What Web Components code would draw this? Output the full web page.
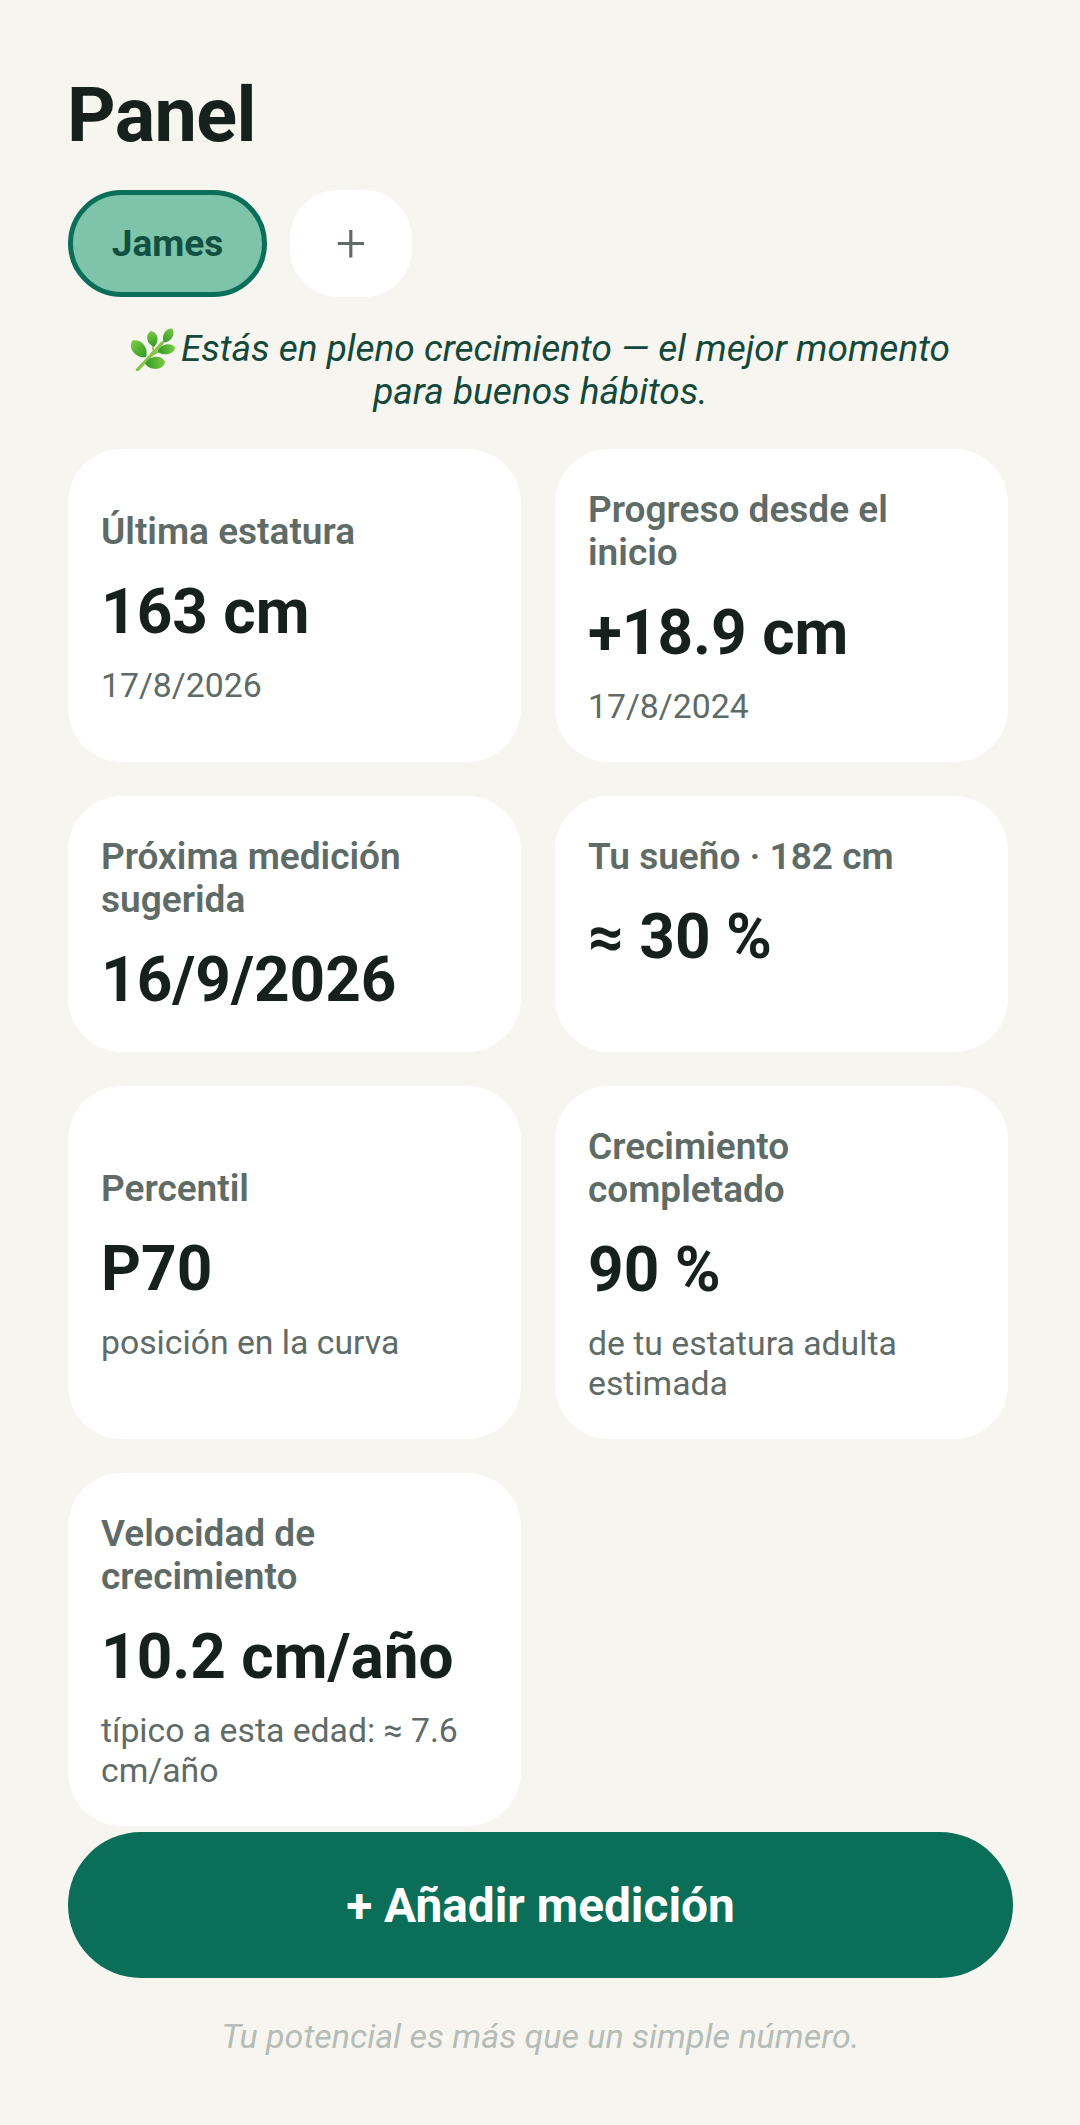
<!DOCTYPE html>
<html lang="es">
<head>
<meta charset="UTF-8">
<title>Panel</title>
<style>
    html, body { margin: 0; background: #f6f5f0; }
    body { font-family: Roboto, "Liberation Sans", sans-serif; }
</style>
</head>
<body>
<growth-panel>
    <span slot="title">Panel</span>
    <profile-pill active>James</profile-pill>
    <profile-pill add>+</profile-pill>
    <span slot="hint">Estás en pleno crecimiento — el mejor momento para buenos hábitos.</span>
    <stat-card label="Última estatura" value="163 cm" sub="17/8/2026" center></stat-card>
    <stat-card label="Progreso desde el inicio" value="+18.9 cm" sub="17/8/2024" center></stat-card>
    <stat-card label="Próxima medición sugerida" value="16/9/2026"></stat-card>
    <stat-card label="Tu sueño · 182 cm" value="≈ 30 %"></stat-card>
    <stat-card label="Percentil" value="P70" sub="posición en la curva" center></stat-card>
    <stat-card label="Crecimiento completado" value="90 %" sub="de tu estatura adulta estimada" center></stat-card>
    <stat-card label="Velocidad de crecimiento" value="10.2 cm/año" sub="típico a esta edad: ≈ 7.6 cm/año" center></stat-card>
    <span slot="action">+ Añadir medición</span>
    <span slot="footer">Tu potencial es más que un simple número.</span>
</growth-panel>

<template id="panel-template">
    <style>
        :host { display: block; height: 2125px; padding: 0 67px 0 68px; box-sizing: border-box; color: #16211d; overflow: hidden; }
        h1 { margin: 0 0 0 -1px; padding-top: 72px; font-size: 75.6px; line-height: 86px; font-weight: 700; color: #16211d; letter-spacing: -0.6px; }
        .pills { display: flex; gap: 23px; margin-top: 32px; }
        .hint { margin: 30px 0 0; padding: 0 30px; text-align: center; font-size: 37px; line-height: 43px; font-style: italic; color: #14483a; }
        .hint svg { width: 44px; height: 43px; vertical-align: -4px; margin: -6px 6px -6px 0; }
        .grid { display: grid; grid-template-columns: repeat(2, 1fr); gap: 34px; margin-top: 36px; padding-right: 5px; }
        .action { display: flex; align-items: center; justify-content: center; box-sizing: border-box; height: 146px; padding-top: 2px; margin-top: 6px; border-radius: 73px; background: #0b6e58; color: #fff; font-size: 47.8px; font-weight: 700; }
        .footer { margin-top: 38px; text-align: center; font-size: 34px; line-height: 40px; font-style: italic; color: #b6bcb7; }
    </style>
    <h1><slot name="title"></slot></h1>
    <div class="pills"><slot></slot></div>
    <p class="hint">
        <svg viewBox="12 10 41 40">
            <defs>
                <linearGradient id="leaf" x1="0" y1="0" x2="0" y2="1">
                    <stop offset="0" stop-color="#7ccb45"/>
                    <stop offset="1" stop-color="#2f9a22"/>
                </linearGradient>
                <path id="l" d="M0 -10 C8 -7 8 5 0 10 C-8 5 -8 -7 0 -10Z" fill="url(#leaf)"/>
            </defs>
            <path d="M18 49 L41 24" stroke="#8bc34a" stroke-width="3" fill="none" stroke-linecap="round"/>
            <path d="M30 36 L40 31 M26 40 L31 40 M33 32 L32 25 M39 26 L44 21" stroke="#8bc34a" stroke-width="1.6" fill="none"/>
            <use href="#l" transform="translate(19.5 29.5) rotate(-40) scale(1 1)"/>
            <use href="#l" transform="translate(32 20) rotate(-12) scale(.8 .75)"/>
            <use href="#l" transform="translate(46.5 17) rotate(30) scale(.7 .75)"/>
            <use href="#l" transform="translate(45 30) rotate(78) scale(.75 .85)"/>
            <use href="#l" transform="translate(34.5 42.5) rotate(85) scale(.95 .95)"/>
        </svg><slot name="hint"></slot>
    </p>
    <div class="grid"><slot name="cards"></slot></div>
    <div class="action"><slot name="action"></slot></div>
    <div class="footer"><slot name="footer"></slot></div>
</template>

<template id="pill-template">
    <style>
        :host { display: flex; align-items: center; justify-content: center; box-sizing: border-box; height: 107px; width: 199px; border-radius: 54px; border: 5px solid #0b6e58; background: #7dc4aa; color: #0f5040; font-size: 37px; font-weight: 700; }
        :host([add]) { width: 122px; border: 0; border-radius: 48px; background: #fff; color: #5f6b67; font-size: 54px; font-weight: 300; }
    </style>
    <slot></slot>
</template>

<template id="card-template">
    <style>
        :host { display: flex; flex-direction: column; box-sizing: border-box; min-height: 256px; padding: 39px 33px 35px; border-radius: 54px; background: #fff; }
        :host([center]) { justify-content: center; }
        .label { font-size: 37px; line-height: 43px; font-weight: 600; color: #5f6b67; }
        .value { margin-top: 23px; font-size: 62.1px; line-height: 72px; font-weight: 700; color: #16211d; }
        .sub { margin-top: 18px; font-size: 33.75px; line-height: 40px; color: #5f6b67; }
        .sub:empty { display: none; }
    </style>
    <div class="label"></div>
    <div class="value"></div>
    <div class="sub"></div>
</template>

<script>
    class GrowthPanel extends HTMLElement {
        constructor() {
            super();
            const tpl = document.getElementById("panel-template");
            this.attachShadow({ mode: "open" }).appendChild(tpl.content.cloneNode(true));
        }
        connectedCallback() {
            // cards are passed in as children, they all go to the grid
            this.querySelectorAll("stat-card").forEach(c => c.setAttribute("slot", "cards"));
        }
    }

    class ProfilePill extends HTMLElement {
        constructor() {
            super();
            const tpl = document.getElementById("pill-template");
            this.attachShadow({ mode: "open" }).appendChild(tpl.content.cloneNode(true));
        }
    }

    class StatCard extends HTMLElement {
        constructor() {
            super();
            const tpl = document.getElementById("card-template");
            this.attachShadow({ mode: "open" }).appendChild(tpl.content.cloneNode(true));
        }
        connectedCallback() {
            const root = this.shadowRoot;
            root.querySelector(".label").textContent = this.getAttribute("label") || "";
            root.querySelector(".value").textContent = this.getAttribute("value") || "";
            root.querySelector(".sub").textContent = this.getAttribute("sub") || "";
        }
    }

    customElements.define("profile-pill", ProfilePill);
    customElements.define("stat-card", StatCard);
    customElements.define("growth-panel", GrowthPanel);
</script>
</body>
</html>
